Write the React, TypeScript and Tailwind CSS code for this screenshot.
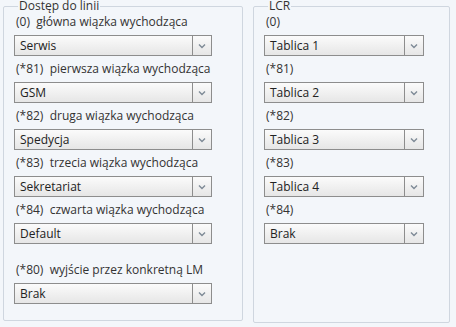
import React from 'react'

// ─── Line access settings panel ──────────────────────────────────────────────

const lines = [
  { label: '(0)  główna wiązka wychodząca', value: 'Serwis' },
  { label: '(*81)  pierwsza wiązka wychodząca', value: 'GSM' },
  { label: '(*82)  druga wiązka wychodząca', value: 'Spedycja' },
  { label: '(*83)  trzecia wiązka wychodząca', value: 'Sekretariat' },
  { label: '(*84)  czwarta wiązka wychodząca', value: 'Default' },
]

const lcr = [
  { label: '(0)', value: 'Tablica 1' },
  { label: '(*81)', value: 'Tablica 2' },
  { label: '(*82)', value: 'Tablica 3' },
  { label: '(*83)', value: 'Tablica 4' },
  { label: '(*84)', value: 'Brak' },
]

export default function App() {
  return (
    <div
      className="w-[456px] h-[327px] bg-[#f3f6fa] flex gap-[10px] pl-[3px] text-[12px] text-[#333] overflow-hidden"
      style={{ fontFamily: '"Open Sans", "DejaVu Sans", sans-serif' }}
    >
      <Group title="Dostęp do linii" className="w-[240px] h-[321px]">
        {lines.map((l) => (
          <Row key={l.label} label={l.label} value={l.value} width="w-[198px]" />
        ))}
        <div className="mt-[13px]">
          <Row label="(*80)  wyjście przez konkretną LM" value="Brak" width="w-[198px]" />
        </div>
      </Group>

      <Group title="LCR" className="w-[197px] h-[323px]">
        {lcr.map((l) => (
          <Row key={l.label} label={l.label} value={l.value} width="w-[160px]" />
        ))}
      </Group>
    </div>
  )
}

// ─── Group box (fieldset) ─────────────────────────────────────────────────────

function Group({ title, className, children }: { title: string; className: string; children: React.ReactNode }) {
  return (
    <fieldset className={`border border-[#cfd6df] rounded-[2px] pl-[10px] ${className}`}>
      <legend className="ml-[4px] px-[1px] h-[12px] leading-[12px]">{title}</legend>
      <div className="pt-[1px] flex flex-col">{children}</div>
    </fieldset>
  )
}

// ─── Label + combo box ────────────────────────────────────────────────────────

function Row({ label, value, width }: { label: string; value: string; width: string }) {
  return (
    <div className="flex flex-col pb-[4px]">
      <div className="h-[18px] leading-[18px] pl-[2px] whitespace-pre">{label}</div>
      <div className={`mt-[4px] h-[21px] flex border border-[#8d8d8d] bg-gradient-to-b from-[#fbfbfb] to-[#e6e6e6] ${width}`}>
        <span className="flex-1 pl-[5px] leading-[19px] text-[#222]">{value}</span>
        <span className="w-[19px] border-l border-[#8d8d8d] flex items-center justify-center">
          <svg width="8" height="6" viewBox="0 0 8 6">
            <path d="M1 1.5 L4 4.5 L7 1.5" fill="none" stroke="#7e8a96" strokeWidth="1.4" />
          </svg>
        </span>
      </div>
    </div>
  )
}
